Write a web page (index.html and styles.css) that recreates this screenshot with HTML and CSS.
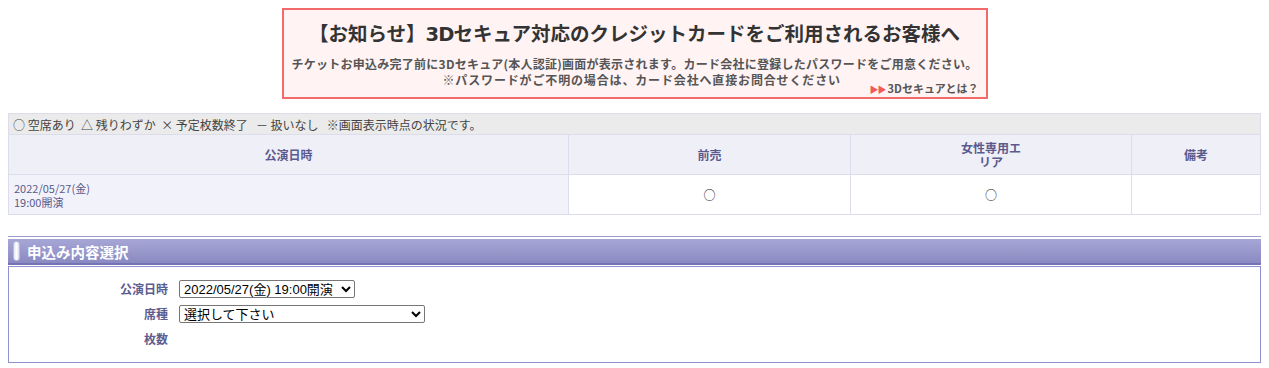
FILE: index.html
```html
<!DOCTYPE html>
<html lang="ja">
<head>
<meta charset="UTF-8">
<title>チケット申込み</title>
<link rel="stylesheet" href="styles.css">
</head>
<body>
<div class="notice">
  <div class="notice-title">【お知らせ】<b class="d3">3D</b>セキュア対応のクレジットカードをご利用されるお客様へ</div>
  <div class="notice-text">チケットお申込み完了前に3Dセキュア(本人認証)画面が表示されます。カード会社に登録したパスワードをご用意ください。</div>
  <div class="notice-foot">
    <span class="notice-sub">※パスワードがご不明の場合は、カード会社へ直接お問合せください</span>
    <span class="notice-link"><span class="arrows">▶▶</span>3Dセキュアとは？</span>
  </div>
</div>

<table class="schedule">
  <colgroup>
    <col style="width:560px">
    <col style="width:282px">
    <col style="width:281px">
    <col>
  </colgroup>
  <tr>
    <td class="legend" colspan="4">○ 空席あり&nbsp; △ 残りわずか&nbsp; × 予定枚数終了&nbsp;&nbsp; － 扱いなし&nbsp;&nbsp; ※画面表示時点の状況です。</td>
  </tr>
  <tr>
    <th>公演日時</th>
    <th>前売</th>
    <th>女性専用エ<br>リア</th>
    <th>備考</th>
  </tr>
  <tr>
    <td class="date">2022/05/27(金)<br>19:00開演</td>
    <td class="mark">○</td>
    <td class="mark">○</td>
    <td class="mark"></td>
  </tr>
</table>

<div class="sec-head">
  <div class="sec-bar"><span class="pill"></span>申込み内容選択</div>
</div>
<div class="sec-box">
  <div class="form-row">
    <label class="form-label">公演日時</label>
    <select class="sel-date"><option>2022/05/27(金) 19:00開演</option></select>
  </div>
  <div class="form-row">
    <label class="form-label">席種</label>
    <select class="sel-seat"><option>選択して下さい</option></select>
  </div>
  <div class="form-row">
    <label class="form-label">枚数</label>
  </div>
</div>
</body>
</html>
```

FILE: styles.css
```css
body {
  margin: 8px;
  font-family: "Noto Sans CJK JP", "Liberation Sans", sans-serif;
  font-size: 12px;
  color: #333;
  background: #fff;
}
.notice {
  width: 706px;
  height: 91px;
  box-sizing: border-box;
  margin: 0 auto;
  border: 2px solid #f26a6a;
  background: #fff3f3;
  color: #444;
  padding-top: 10px;
  text-align: center;
}
.notice-title {
  font-size: 19.5px;
  font-weight: bold;
  color: #333;
  line-height: 26px;
  letter-spacing: 0;
}
.notice-title .d3 {
  font-family: "DejaVu Sans", sans-serif;
  font-weight: 900;
  letter-spacing: -1px;
}
.notice-text {
  margin-top: 8px;
  font-size: 12px;
  font-weight: bold;
  line-height: 16px;
  color: #555;
  letter-spacing: 0.25px;
}
.notice-foot {
  display: flex;
  align-items: flex-start;
  padding: 0 7px 0 159px;
}
.notice-sub {
  font-size: 12px;
  font-weight: bold;
  color: #555;
  line-height: 16px;
  letter-spacing: 0.85px;
  text-align: left;
  flex: 1;
}
.notice-link {
  font-size: 11px;
  font-weight: bold;
  color: #555;
  line-height: 14px;
  margin-top: 9px;
}
.arrows {
  color: #f05a5a;
  font-size: 9px;
  letter-spacing: -1px;
  margin-right: 2px;
}
.schedule {
  width: 100%;
  margin-top: 14px;
  border-collapse: collapse;
  table-layout: fixed;
}
.schedule td, .schedule th {
  border: 1px solid #dcdcec;
  padding: 0 5px;
}
.schedule .legend {
  background: #ebebeb;
  height: 20px;
  padding: 0 4px;
  color: #444;
  font-size: 12px;
}
.schedule th {
  background: #efeff8;
  color: #5a5a8e;
  font-size: 12px;
  font-weight: bold;
  height: 39px;
  line-height: 14px;
}
.schedule .date {
  background: #f2f2fa;
  color: #5a5a8a;
  font-size: 11px;
  line-height: 14px;
  height: 39px;
}
.schedule .mark {
  text-align: center;
  font-size: 12px;
  color: #222;
}
.sec-head {
  margin-top: 21px;
  border-top: 1px solid #9c9cd0;
  padding-top: 2px;
}
.sec-bar {
  height: 24px;
  background: linear-gradient(#a6a6d6, #8a8ac2);
  border-bottom: 2px solid #7474b4;
  color: #fff;
  font-size: 14.5px;
  font-weight: bold;
  display: flex;
  align-items: center;
  padding-left: 5px;
}
.pill {
  display: inline-block;
  width: 5px;
  height: 18px;
  border-radius: 3px;
  border: 1px solid #b8b8e0;
  background: linear-gradient(90deg, #e4e4f4, #fff, #dcdcf0);
  margin-right: 7px;
}
.sec-box {
  margin-top: 1px;
  border: 1px solid #8f8fd2;
  height: 97px;
  box-sizing: border-box;
  padding-top: 9px;
}
.form-row {
  display: flex;
  align-items: center;
  height: 25px;
}
.form-label {
  width: 159px;
  text-align: right;
  font-weight: bold;
  color: #5c5c90;
  font-size: 12px;
  margin-right: 11px;
}
select {
  font-family: "Liberation Sans", "Noto Sans CJK JP", sans-serif;
  font-size: 13px;
  height: 18px;
  padding: 0;
  color: #000;
  border: 1px solid #767676;
  border-radius: 2px;
  background: #fff;
}
.sel-date {
  width: 176px;
}
.sel-seat {
  width: 246px;
}
```
